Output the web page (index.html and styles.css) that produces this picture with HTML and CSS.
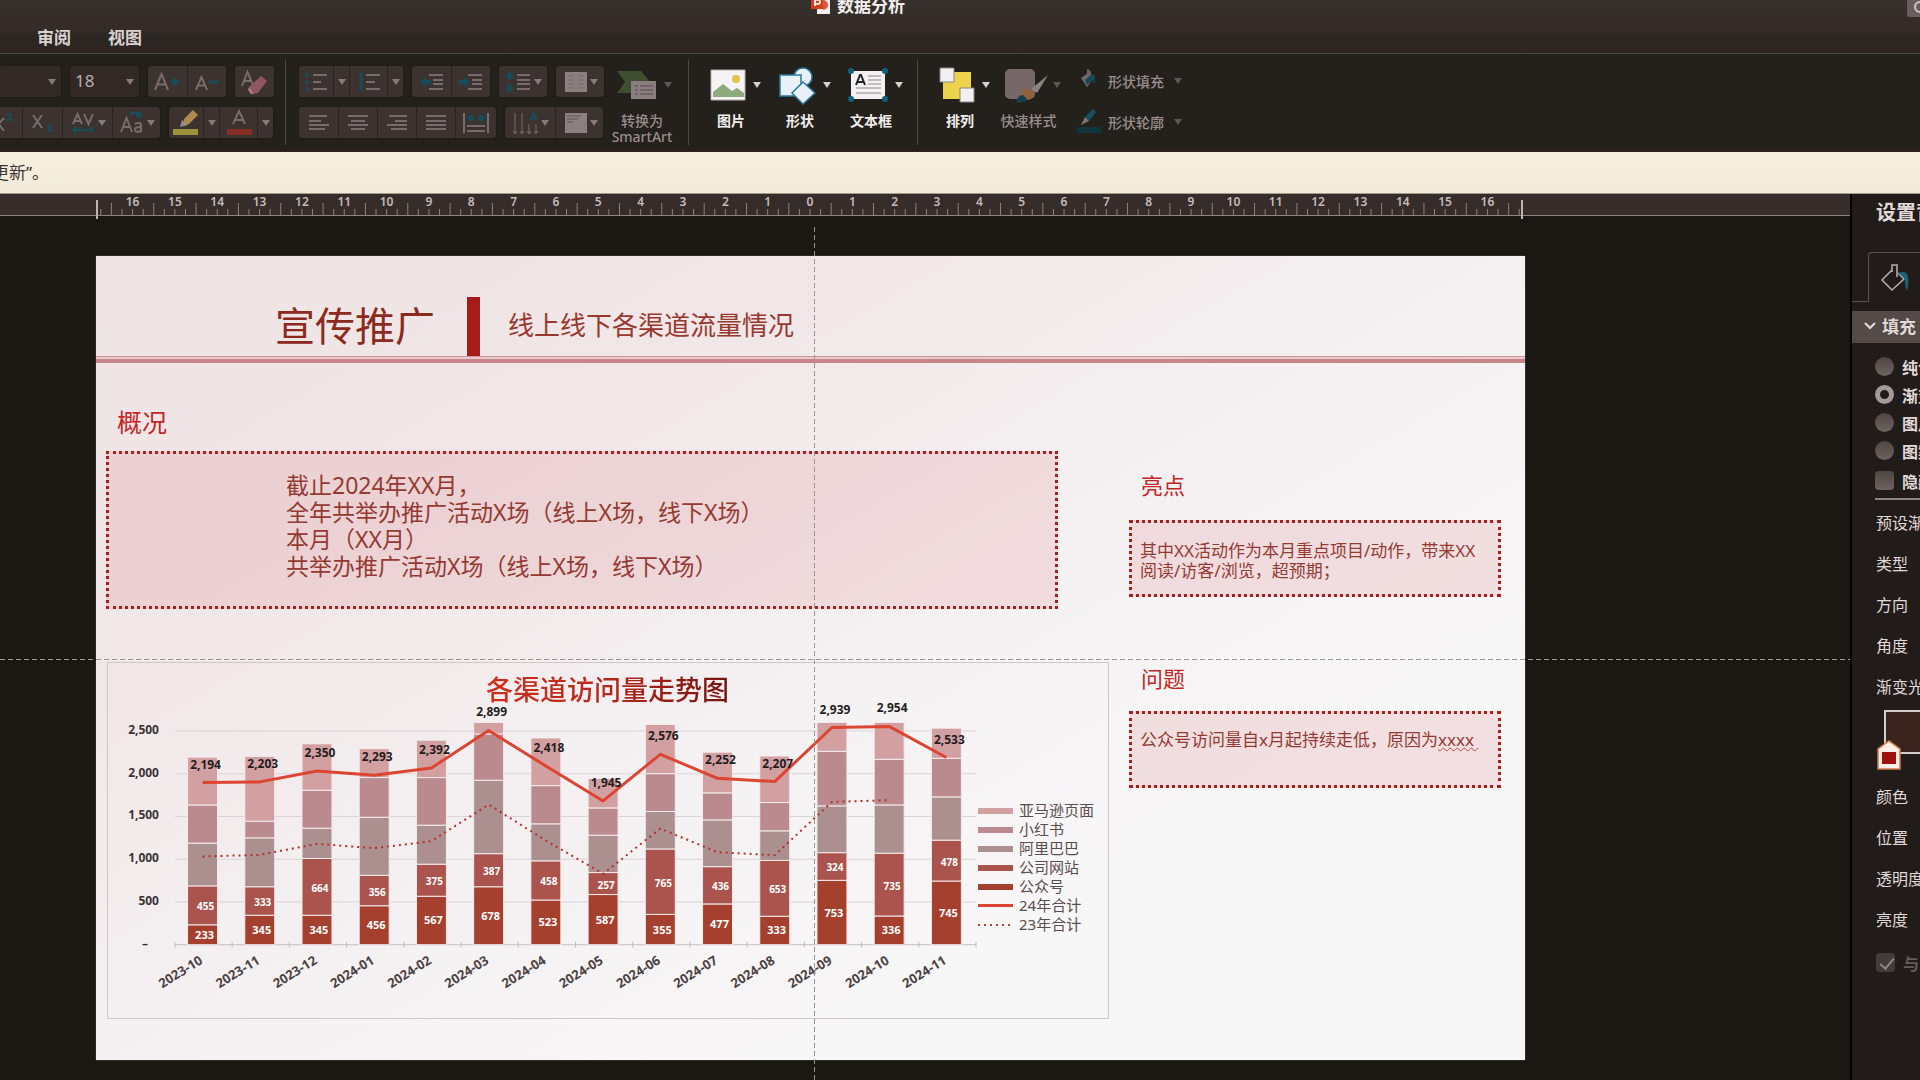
FILE: index.html
```html
<!DOCTYPE html>
<html lang="zh-CN">
<head>
<meta charset="utf-8">
<title>数据分析</title>
<link rel="stylesheet" href="styles.css">
</head>
<body>
<header class="titlebar">
  <div class="doc-title">
    <svg class="doc-icon" width="20" height="20" viewBox="0 0 20 20" aria-hidden="true">
      <path d="M6 3h13v15H6z" fill="#f4efee"/><path d="M12 4a5 5 0 0 1 0 10z" fill="#e0563a"/><path d="M0 1h12v12H0z" fill="#cf4021"/>
      <path d="M4 10V4h3a2 2 0 0 1 0 4H4" fill="none" stroke="#fff" stroke-width="1.6"/>
    </svg>
    <span>数据分析</span>
  </div>
  <button class="search" aria-label="搜索"><svg width="16" height="16" viewBox="0 0 16 16"><circle cx="7" cy="6" r="5" fill="none" stroke="#cfc6c6" stroke-width="2"/><path d="M11 10l4 4" stroke="#cfc6c6" stroke-width="2"/></svg></button>
  <nav class="tabs">
    <a href="#review">审阅</a>
    <a href="#view">视图</a>
  </nav>
</header>

<div class="ribbon">
  <div class="stack">
    <div class="row">
      <label class="combo combo-font"><select aria-label="字体"><option></option></select><i class="caret"></i></label>
      <label class="combo combo-size"><select aria-label="字号"><option>18</option></select><i class="caret"></i></label>
      <div class="group">
        <button class="w39" aria-label="增大字号"><svg width="32" height="24"><path d="M3 20L9.500 4l6.500 16M5.500 14.500h8" class="g"/><path d="M19 12h8M23 8v8" class="t"/></svg></button>
        <button class="w39" aria-label="减小字号"><svg width="32" height="24"><path d="M5 20L10.500 7l5.500 13M7 15.500h7" class="g"/><path d="M18 12h9" class="t"/></svg></button>
      </div>
      <div class="group">
        <button class="w39" aria-label="清除格式"><svg width="34" height="28"><path d="M4 18L9.500 4l5 12M6 13h7" class="g"/><path d="M11 19l12-11 6 5-9 12-6 1-3-3z" fill="#8f5560"/><path d="M11 19l5 7-3 0-3-4z" fill="#b07c86"/></svg></button>
      </div>
    </div>
    <div class="row">
      <div class="group cut-left">
        <button class="w22" aria-label="上标"><svg width="22" height="24"><path d="M-8 20L4 7M-6 7L4 20" class="g"/><path d="M7 4q4-2 4 1t-4 4h5" class="t thin"/></svg></button>
        <button class="w40" aria-label="下标"><svg width="30" height="24"><path d="M5 4l9 13M14 4L5 17" class="g"/><path d="M19 15q4-2 4 1t-4 4h5" class="t thin"/></svg></button>
        <button class="w50" aria-label="字符间距"><svg width="26" height="24"><path d="M3 13L7.500 3 12 13M5 10h5M14 3l4.500 10L23 3" class="g"/><path d="M3 19h20M6 16l-3 3 3 3M20 16l3 3-3 3" class="t thin"/></svg><i class="caret"></i></button>
        <button class="w48" aria-label="更改大小写"><svg width="26" height="26"><path d="M2 22L7.500 8l5.500 14M4 17h7M16 14q6-3 6 2v6M22 17q-7 0-6 3t6 1" class="g"/><path d="M11 5q5-5 10 0M21 2v4h-4" class="t"/></svg><i class="caret"></i></button>
      </div>
      <div class="group">
        <button class="w34" aria-label="突出显示颜色"><svg width="28" height="28"><path d="M12 10l9-9 5 5-9 9-6 1z" fill="#b08a4e"/><path d="M10 11l6 5-8 2z" fill="#988f8b"/><path d="M1 20h25v6H1z" fill="#9c923b"/></svg></button>
        <button class="w16 carbtn" aria-label="突出显示选项"><i class="caret"></i></button>
        <button class="w38" aria-label="字体颜色"><svg width="28" height="28"><path d="M8 15L14 2l6 13M10 11h8" class="g"/><path d="M2 20h25v6H2z" fill="#862d24"/></svg></button>
        <button class="w16 carbtn" aria-label="字体颜色选项"><i class="caret"></i></button>
      </div>
    </div>
  </div>
  <div class="sep"></div>
  <div class="stack">
    <div class="row">
      <div class="group">
        <button class="w34" aria-label="项目符号"><svg width="24" height="22"><path d="M9 4h14M9 11h8M9 18h14" class="g"/><path d="M3 2v4M3 9v4M3 16v4" class="t"/></svg></button>
        <button class="w16 carbtn" aria-label="项目符号选项"><i class="caret"></i></button>
        <button class="w38" aria-label="编号"><svg width="24" height="22"><path d="M9 4h14M9 11h9M9 18h14" class="g"/><path d="M4 2v18" class="t"/></svg></button>
        <button class="w16 carbtn" aria-label="编号选项"><i class="caret"></i></button>
      </div>
      <div class="group">
        <button class="w39" aria-label="减少缩进"><svg width="26" height="22"><path d="M10 4h14M14 9h10M14 13h10M10 18h14" class="g"/><path d="M1 11l6-5v3h5v4H7v3z" fill="#174d5b"/></svg></button>
        <button class="w39" aria-label="增加缩进"><svg width="26" height="22"><path d="M10 4h14M14 9h10M14 13h10M10 18h14" class="g"/><path d="M12 11L6 6v3H1v4h5v3z" fill="#174d5b"/></svg></button>
      </div>
      <div class="group">
        <button class="w48" aria-label="行距"><svg width="28" height="24"><path d="M13 5h13M13 10h13M13 14h13M13 19h13" class="g"/><path d="M5 1l5 6H7v3H4V7H1zM5 23l5-6H7v-3H4v3H1z" fill="#174d5b"/></svg><i class="caret"></i></button>
      </div>
      <div class="group">
        <button class="w48" aria-label="分栏"><svg width="26" height="22"><path d="M3 1h22v20H3z" fill="#8a8080"/><path d="M6 5h6M6 9h6M6 13h6M6 17h6M16 5h6M16 9h6M16 13h6M16 17h6" stroke="#756b6a"/></svg><i class="caret"></i></button>
      </div>
    </div>
    <div class="row">
      <div class="group">
        <button class="w39" aria-label="左对齐"><svg width="24" height="20"><path d="M2 3h18M2 8h12M2 12h20M2 16h16" class="g"/></svg></button>
        <button class="w39" aria-label="居中"><svg width="24" height="20"><path d="M2 3h20M5 8h14M2 12h20M5 16h14" class="g"/></svg></button>
        <button class="w39" aria-label="右对齐"><svg width="24" height="20"><path d="M4 3h18M10 8h12M2 12h20M6 16h16" class="g"/></svg></button>
        <button class="w39" aria-label="两端对齐"><svg width="24" height="20"><path d="M2 3h20M2 8h20M2 12h20M2 16h20" class="g"/></svg></button>
        <button class="w41" aria-label="分散对齐"><svg width="28" height="24"><path d="M2 2v20M26 2v20M5 15h18M5 20h18" class="g"/><path d="M4 7l5-4 4 4-4 4zM24 7l-5-4-4 4 4 4z" fill="#174d5b"/></svg></button>
      </div>
      <div class="group">
        <button class="w50" aria-label="文字方向"><svg width="28" height="24"><path d="M4 2v20M11 2v20M18 13v9M25 13v9M2 20l2 3 2-3M9 20l2 3 2-3M16 20l2 3 2-3M23 20l2 3 2-3" class="g slim"/><path d="M19 9l4-7 3 7M20 7h5" class="t thin"/></svg><i class="caret"></i></button>
        <button class="w48" aria-label="对齐文本"><svg width="26" height="22"><path d="M3 1h22v20H3z" fill="#8a8080"/><path d="M5 4h14M5 7h11M5 10h6" stroke="#5d5453"/></svg><i class="caret"></i></button>
      </div>
    </div>
  </div>
  <button class="big dim smartart">
    <span class="pic"><svg width="40" height="36" viewBox="0 0 40 36"><path d="M0 4h24l9 11-9 11H0l8-11z" fill="#3e4f2f"/><path d="M14 14h25v18H14z" fill="#8a7d7f"/><path d="M18 19h18M18 23h18M18 27h18" stroke="#554b4c" stroke-dasharray="3 2 20"/></svg><i class="caret"></i></span>
    <span>转换为<br>SmartArt</span>
  </button>
  <div class="sep"></div>
  <div class="bigs">
    <button class="big">
      <span class="pic"><svg width="36" height="36" viewBox="0 0 36 36"><path d="M1 3h34v30H1z" fill="#f5f3f3" stroke="#b9b3b3"/><circle cx="26" cy="12" r="4" fill="#e3c545"/><path d="M3 30v-5l10-8 9 7 5-3 7 5v4z" fill="#8fab7e"/></svg><i class="caret"></i></span>
      <span>图片</span>
    </button>
    <button class="big">
      <span class="pic"><svg width="38" height="40" viewBox="0 0 38 40"><g fill="#e8f1f9" stroke="#2a789d" stroke-width="1.500"><circle cx="25" cy="12" r="9"/><path d="M2 10h21v21H2z"/><path d="M25 17l12 11-12 11-11-11z"/></g></svg><i class="caret"></i></span>
      <span>形状</span>
    </button>
    <button class="big">
      <span class="pic"><svg width="40" height="36" viewBox="0 0 40 36"><path d="M3 4h34v28H3z" fill="#f3f1f1"/><g fill="#15607a"><circle cx="3" cy="4" r="3"/><circle cx="37" cy="4" r="3"/><circle cx="3" cy="32" r="3"/><circle cx="37" cy="32" r="3"/></g><path d="M8 18l4-10h1l4 10M9 15h6" fill="none" stroke="#222" stroke-width="2"/><path d="M20 9h13M20 13h13M20 17h13M8 21h25M8 26h25" stroke="#8d8788"/></svg><i class="caret"></i></span>
      <span>文本框</span>
    </button>
  </div>
  <div class="sep"></div>
  <div class="bigs arrange">
    <button class="big">
      <span class="pic"><svg width="36" height="36" viewBox="0 0 36 36"><path d="M4 5h28v27H4z" fill="#edd34c"/><path d="M1 1h14v14H1zM21 21h14v14H21z" fill="#f2f0f2" stroke="#8b8585"/></svg><i class="caret"></i></span>
      <span>排列</span>
    </button>
    <button class="big dim">
      <span class="pic"><svg width="46" height="38" viewBox="0 0 46 38"><rect x="2" y="3" width="30" height="30" rx="5" fill="#766868"/><path d="M45 9L34 27l-6-4z" fill="#8b8282"/><path d="M18 29q4-8 9-6l4 5q-1 6-8 6z" fill="#925f38"/><path d="M13 36q2-7 7-7l4 4q-3 5-11 3z" fill="#12404c"/></svg><i class="caret"></i></span>
      <span>快速样式</span>
    </button>
  </div>
  <div class="stack shape-tools">
    <button class="tool dim"><svg width="26" height="28" viewBox="0 0 26 28"><path d="M5 11l7-5 5 6-6 8z" fill="#716a6a"/><path d="M12 2v7M14 4v5" stroke="#6b6463" stroke-width="2"/><path d="M9 13l7-6 3 2v8l-2-4-6 5z" fill="#164856"/></svg><span>形状填充</span><i class="caret"></i></button>
    <button class="tool dim"><svg width="26" height="28" viewBox="0 0 26 28"><path d="M9 9l8-8 3 3-7 9z" fill="#17505e"/><path d="M9 9l4 4-8 4z" fill="#7d7574"/><path d="M1 19h24v6H1z" fill="#10353e"/></svg><span>形状轮廓</span><i class="caret"></i></button>
  </div>
</div>

<div class="notice">更新”。</div>

<div class="workspace">
  <main class="editor">
    <div class="ruler"><svg id="ruler" viewBox="0 0 1429 22"></svg></div>
    <div class="canvas">
      <article class="slide">
        <header class="slide-head">
          <h1>宣传推广</h1>
          <div class="mark"></div>
          <h2>线上线下各渠道流量情况</h2>
        </header>
        <div class="slide-body">
          <div class="left">
            <h3>概况</h3>
            <p class="note overview">截止2024年XX月，<br>全年共举办推广活动X场（线上X场，线下X场）<br>本月（XX月）<br>共举办推广活动X场（线上X场，线下X场）</p>
            <figure class="chart">
              <figcaption><span>各渠道访问量走势图</span></figcaption>
              <div class="chart-row">
                <svg id="chart" viewBox="0 0 870 310"></svg>
                <ul class="legend">
                  <li><i class="sw c5"></i>亚马逊页面</li>
                  <li><i class="sw c4"></i>小红书</li>
                  <li><i class="sw c3"></i>阿里巴巴</li>
                  <li><i class="sw c2"></i>公司网站</li>
                  <li><i class="sw c1"></i>公众号</li>
                  <li><i class="sw solid"></i>24年合计</li>
                  <li><i class="sw dots"></i>23年合计</li>
                </ul>
              </div>
            </figure>
          </div>
          <div class="right">
            <h3>亮点</h3>
            <p class="note small">其中XX活动作为本月重点项目/动作，带来XX阅读/访客/浏览，超预期；</p>
            <h3 class="second">问题</h3>
            <p class="note small">公众号访问量自x月起持续走低，原因为<span class="misspelt">xxxx </span></p>
          </div>
        </div>
      </article>
      <div class="guide-v"></div>
      <div class="guide-h"></div>
    </div>
  </main>
  <aside class="pane">
    <h2>设置背</h2>
    <div class="pane-tabs"><button aria-label="填充"><svg width="32" height="30" viewBox="0 0 32 30"><path d="M12 9V2h5v12M12 7L2 17l10 10 12-11-6-6" fill="none" stroke="#b3abaa" stroke-width="1.600"/><path d="M18 10q9-3 10 4 1 6-1 14-2-4-2-9 0-4-3-6z" fill="#1c6379"/></svg></button></div>
    <button class="section"><svg width="12" height="8" viewBox="0 0 12 8"><path d="M1 1l5 5 5-5" fill="none" stroke="#e6dfde" stroke-width="2"/></svg>填充</button>
    <div class="choices">
      <label><input type="radio" name="fill">纯色</label>
      <label><input type="radio" name="fill" checked>渐变</label>
      <label><input type="radio" name="fill">图片</label>
      <label><input type="radio" name="fill">图案</label>
      <label><input type="checkbox">隐藏</label>
    </div>
    <ul class="props">
      <li>预设渐</li><li>类型</li><li>方向</li><li>角度</li><li>渐变光</li>
    </ul>
    <div class="stops"><div class="bar"></div><svg width="26" height="32" viewBox="0 0 26 32"><path d="M2 30V10L13 2l11 8v20z" fill="#fbeee8" stroke="#cf7a4b" stroke-width="1.500"/><path d="M6 13h14v12H6z" fill="#9c120e"/></svg></div>
    <ul class="props">
      <li>颜色</li><li>位置</li><li>透明度</li><li>亮度</li>
    </ul>
    <label class="rotate"><input type="checkbox" checked disabled>与</label>
  </aside>
</div>
<script src="script.js"></script>
</body>
</html>
```
FILE: styles.css
```css
* { box-sizing: border-box; }
body {
  margin: 0;
  height: 100vh;
  overflow: hidden;
  display: flex;
  flex-direction: column;
  background: #1b1813;
  color: #e0d9d8;
  font-family: "Noto Sans", "Noto Sans CJK SC", sans-serif;
}
h1, h2, h3, p, figure, ul { margin: 0; padding: 0; font-weight: 400; }
ul { list-style: none; }
button, select { font: inherit; color: inherit; background: none; border: 0; padding: 0; margin: 0; }
svg { display: block; flex: none; }
a { color: inherit; text-decoration: none; }

.titlebar {
  flex: none;
  height: 54px;
  position: relative;
  border-bottom: 1px solid #4d4643;
  background: linear-gradient(#37322e 0, #352c29 18px, #352b27 30px, #2c2723 34px, #2c2622 42px, #322523 53px);
}
.doc-title {
  height: 12px;
  padding-right: 354px;
  padding-left: 150px;
  display: flex;
  align-items: center;
  justify-content: center;
  gap: 6px;
  font-size: 17px;
  line-height: 12px;
  font-weight: 700;
  color: #f3efee;
}
.search { position: absolute; right: 0; top: 0; width: 13px; height: 17px; overflow: hidden; background: #6a5d5d; padding: 0 0 0 6px; border-radius: 0 0 0 2px; }
.tabs { display: flex; gap: 37px; padding: 14px 0 0 37px; font-size: 17px; line-height: 24px; font-weight: 700; color: #d9d2d1; }

.ribbon { flex: none; height: 98px; display: flex; align-items: flex-start; padding-top: 6px; background: #24201c; border-bottom: 1px solid #33211f; }
.stack { display: flex; flex-direction: column; gap: 10px; padding-top: 6px; }
.row { display: flex; gap: 9px; }
.group, .combo { display: flex; height: 31px; border-radius: 3px; background: #3c322f; overflow: hidden; box-shadow: 0 0 2px #171310; }
.cut-left { border-radius: 0 3px 3px 0; }
.group button { display: flex; align-items: center; justify-content: center; gap: 2px; }
.group button + button { border-left: 1px solid #2a2220; }
.combo { background: #322927; align-items: center; }
.combo select { appearance: none; flex: 1; min-width: 0; height: 31px; padding: 0 0 2px 5px; font-size: 17px; color: #b9afae; }
.combo .caret { margin: 0 5px; }
.combo-font { width: 61px; border-radius: 0 3px 3px 0; }
.combo-size { width: 69px; }
.caret { flex: none; width: 0; height: 0; border: 4px solid transparent; border-top: 6px solid #857a79; border-bottom: 0; }
.w16 { width: 16px; } .w22 { width: 22px; } .w34 { width: 34px; } .w38 { width: 38px; } .w39 { width: 39px; }
.w40 { width: 40px; } .w41 { width: 41px; } .w48 { width: 48px; } .w50 { width: 50px; }
.g { fill: none; stroke: #776c6b; stroke-width: 2; }
.t { fill: none; stroke: #174d5b; stroke-width: 3; }
.thin { stroke-width: 2; }
.slim { stroke-width: 1; }
.sep { flex: none; width: 1px; height: 85px; margin: 0 13px 0 11px; background: #4d4644; }
.big { display: flex; flex-direction: column; align-items: center; font-size: 14px; line-height: 16px; font-weight: 700; color: #f1edec; }
.big .pic { display: flex; align-items: center; gap: 7px; height: 50px; padding-left: 15px; margin-bottom: 3px; }
.big .pic + span { padding-left: 6px; }
.big .caret { border-top-color: #d6cfce; }
.dim, .big.dim { color: #998e8d; font-weight: 500; }
.dim .caret, .big.dim .caret { border-top-color: #5f5655; }
.smartart { margin-left: 7px; width: 62px; }
.smartart .pic { padding-left: 4px; }
.smartart .pic + span { padding-left: 0; }
.bigs { display: flex; gap: 2px; }
.smartart + .sep { margin: 0 6px 0 15px; }
.bigs + .sep { margin: 0 6px 0 14px; }
.bigs.arrange { gap: 6px; }
.arrange .dim .pic { gap: 4px; padding-left: 7px; }
.arrange .dim .pic + span { padding-left: 0; }
.shape-tools { margin-left: 15px; padding-top: 5px; gap: 9px; }
.tool { display: flex; align-items: center; height: 32px; gap: 6px; font-size: 14px; }
.tool .caret { margin-left: 4px; }

.notice { flex: none; height: 42px; padding-top: 9px; text-indent: -8px; font-size: 17px; line-height: 24px; color: #3b312d; background: linear-gradient(#f8f0de, #f2ead8); border-bottom: 1px solid #a59b8c; overflow: hidden; }

.workspace { flex: 1; min-height: 0; display: flex; }
.editor { flex: 1; min-width: 0; display: flex; flex-direction: column; border-right: 1px solid #050403; }
.ruler { flex: none; height: 22px; background: #362c2a; border-bottom: 1px solid #8b8381; padding: 0 325px 0 96px; }
.ruler svg { width: 100%; height: 22px; overflow: visible; }
.ruler line { stroke: #8b8381; }
.ruler .end { stroke: #bdb5b4; stroke-width: 2; }
.ruler text { font-size: 12px; font-weight: 600; fill: #c4bcbb; text-anchor: middle; }
.canvas { flex: 1; min-height: 0; position: relative; padding: 40px 325px 20px 96px; overflow: hidden; }
.guide-v { position: absolute; left: 814px; top: 11px; bottom: 0; width: 1px; background: repeating-linear-gradient(#9b9494 0 5px, transparent 5px 8px); }
.guide-h { position: absolute; left: 0; right: 0; top: 443px; height: 1px; background: repeating-linear-gradient(90deg, #9b9494 0 5px, transparent 5px 8px); }

.slide { background: linear-gradient(150deg, #f0e4e4 0, #f1e7e8 28%, #f4f0f2 48%, #f8f7f8 75%); box-shadow: 0 0 1px #8d8787; padding-bottom: 41px; }
.slide-head { display: flex; align-items: flex-end; height: 107px; padding-left: 179px; border-bottom: 4px solid #c78489; position: relative; box-shadow: inset 0 -2px #e8cccd, inset 0 -3px #c99599; }
.slide-head h1 { font-size: 40px; line-height: 60px; color: #8c2a20; padding-bottom: 3px; }
.mark { width: 13px; height: 59px; margin: 0 28px 3px 32px; background: #a51c19; }
.slide-head h2 { font-size: 26px; line-height: 40px; color: #983930; padding-bottom: 14px; }
.slide-body { display: grid; grid-template-columns: minmax(0, 1fr) 372px; gap: 20px; padding: 0 24px 0 10px; }
.left { padding-top: 43px; }
.left h3 { padding-left: 11px; font-size: 25px; line-height: 32px; color: #c32626; }
.right { padding-top: 106px; }
.right h3 { padding-left: 12px; font-size: 22px; line-height: 32px; color: #c32626; }
.right .second { margin-top: 65px; }
.note { border: 3px dotted #a3201e; background: rgba(218, 122, 126, .19); color: #943a33; }
.overview { margin: 13px 51px 53px 0; min-height: 158px; padding: 18px 0 0 177px; font-size: 23px; line-height: 27px; }
.small { margin-top: 19px; min-height: 77px; padding: 18px 14px 0 8px; font-size: 17px; line-height: 20px; white-space: pre-wrap; }
.second + .small { margin-top: 17px; padding-top: 16px; }
.misspelt { text-decoration: underline wavy #c8453f 1px; }

.chart { border: 1px solid #cdc8ca; min-height: 357px; margin-left: 1px; }
.chart figcaption { height: 42px; padding: 9px 0 0 378px; font-size: 27px; line-height: 36px; font-weight: 500; }
.chart figcaption span { background: linear-gradient(90deg, #cf2f1c, #b8281c 50%, #74140f); background-clip: text; color: transparent; }
.chart-row { display: flex; align-items: flex-start; }
#chart { flex: 1 1 0; min-width: 0; overflow: visible; }
.legend { width: 131px; flex: none; padding-top: 96px; font-size: 15px; line-height: 19px; color: #5b4c4d; white-space: nowrap; }
.legend li { display: flex; align-items: center; gap: 6px; }
.sw { width: 35px; height: 6px; flex: none; margin-left: 1px; }
.c5 { background: #d3a0a2; fill: #d3a0a2; }
.c4 { background: #bb8a8f; fill: #bb8a8f; }
.c3 { background: #ac8f8f; fill: #ac8f8f; }
.c2 { background: #ab544d; fill: #ab544d; }
.c1 { background: #a6402e; fill: #a6402e; }
.solid { height: 3px; background: #dc4531; }
.dots { height: 2px; background: repeating-linear-gradient(90deg, #b5403b 0 2px, transparent 2px 6px); }
#chart .grid { stroke: #d9d3d6; }
#chart .axis { stroke: #c3bcbf; }
#chart rect { stroke: #f3ecee; stroke-width: 1; }
#chart text { font-weight: 700; text-anchor: middle; }
#chart .ylab { font-size: 12px; text-anchor: end; fill: #3a3334; }
#chart .xlab { font-size: 13px; text-anchor: end; fill: #4b4142; }
#chart .total { font-size: 12px; fill: #231c1d; }
#chart .inner { font-size: 11px; fill: #fff; }
#chart .inner2 { font-size: 10px; fill: #fff; }
#chart .l24 { fill: none; stroke: #dc4531; stroke-width: 3; stroke-linejoin: round; }
#chart .l23 { fill: none; stroke: #b5302b; stroke-width: 2; stroke-dasharray: 2 4; }

.pane { flex: none; width: 69px; overflow: hidden; background: #211c1a; border-left: 1px solid #050403; white-space: nowrap; font-size: 16px; font-weight: 600; }
.pane h2 { padding: 3px 0 0 24px; font-size: 20px; line-height: 32px; font-weight: 700; }
.pane-tabs { display: flex; margin-top: 23px; height: 50px; }
.pane-tabs::before { content: ""; width: 16px; flex: none; border-bottom: 1px solid #595150; }
.pane-tabs button { flex: 1; border: 1px solid #595150; border-width: 1px 0 0 1px; border-radius: 4px 0 0 0; padding-left: 11px; }
.section { width: 100%; margin-top: 9px; height: 32px; display: flex; align-items: center; gap: 6px; padding: 0 0 3px 12px; background: #544a48; font-size: 17px; font-weight: 700; }
.choices { display: flex; flex-direction: column; gap: 3px; margin: 11px 0 0 23px; padding-bottom: 5px; border-bottom: 2px solid #8c8382; }
.choices label, .rotate { display: flex; align-items: center; gap: 8px; height: 25px; }
.choices label:last-child { margin-top: 2px; }
input { appearance: none; flex: none; margin: 0; width: 19px; height: 19px; background: linear-gradient(#4f4543, #6e6361); border-radius: 4px; }
input[type="radio"] { border-radius: 50%; }
input[type="radio"]:checked { background: #211c1a; border: 5px solid #a39a99; }
.props { padding-left: 24px; line-height: 41px; }
.choices + .props { margin-top: 3px; }
.stops { position: relative; height: 69px; padding: 2px 0 0 32px; }
.stops .bar { height: 44px; border: 2px solid #d5cdcb; border-right: 0; background: #38231d; }
.stops svg { position: absolute; left: 24px; top: 31px; }
.rotate { margin: 9px 0 0 24px; color: #655c5b; }
.rotate input { background: #433a39; position: relative; }
.rotate input::after { content: ""; position: absolute; left: 7px; top: 2px; width: 6px; height: 12px; border: solid #8f8685; border-width: 0 2px 2px 0; transform: rotate(40deg); }
```
FILE: script.js
```js
const NS = "http://www.w3.org/2000/svg";
function add(parent, tag, attrs, text) {
  const el = document.createElementNS(NS, tag);
  for (const k in attrs) el.setAttribute(k, attrs[k]);
  if (text !== undefined) el.textContent = text;
  parent.appendChild(el);
  return el;
}

// Ruler: zero in the middle, a tall tick halfway between numbers, short ticks on quarters.
const ruler = document.getElementById("ruler");
const UNIT = 42.34, ZERO = 714;
for (let q = -67; q <= 67; q++) {
  const x = ZERO + q * UNIT / 4;
  if (x < 0 || x > 1426) continue;
  const tall = Math.abs(q % 4) === 2;
  add(ruler, "line", { x1: x, x2: x, y1: tall ? 9 : 15, y2: 21 });
  if (q % 4 === 0) add(ruler, "text", { x: x, y: 12 }, Math.abs(q / 4));
}
add(ruler, "line", { x1: 1, x2: 1, y1: 6, y2: 25, class: "end" });
add(ruler, "line", { x1: 1426, x2: 1426, y1: 6, y2: 25, class: "end" });

// Chart: running totals of the five channels per month, then last year's total.
const months = [
  ["2023-10", [233, 688, 1188, 1635, 2194], 1194],
  ["2023-11", [345, 678, 1250, 1445, 2203], 1216],
  ["2023-12", [345, 1009, 1363, 1807, 2350], 1365],
  ["2024-01", [456, 812, 1491, 1955, 2293], 1306],
  ["2024-02", [567, 942, 1398, 1955, 2392], 1401],
  ["2024-03", [678, 1065, 1924, 2465, 2899], 1896],
  ["2024-04", [523, 981, 1414, 1861, 2418], 1410],
  ["2024-05", [587, 844, 1281, 1600, 1945], 959],
  ["2024-06", [355, 1120, 1558, 2001, 2576], 1572],
  ["2024-07", [477, 913, 1460, 1776, 2252], 1252],
  ["2024-08", [333, 986, 1332, 1663, 2207], 1212],
  ["2024-09", [753, 1077, 1624, 2262, 2939], 1932],
  ["2024-10", [336, 1071, 1635, 2169, 2954], 1955],
  ["2024-11", [745, 1223, 1729, 2181, 2533], null]
];
const chart = document.getElementById("chart");
const LEFT = 67, RIGHT = 869, BASE = 240, STEP = (RIGHT - LEFT) / months.length;
const y = v => BASE - Math.min(v, 2600) * 0.0856;
const yLine = v => BASE - v * 0.074;
const mid = i => LEFT + STEP * (i + 0.5) - 1;

for (let v = 0; v <= 2500; v += 500) {
  add(chart, "line", { x1: LEFT, x2: RIGHT, y1: y(v), y2: y(v), class: v ? "grid" : "axis" });
  add(chart, "text", { x: v ? 51 : 40, y: y(v) + 3, class: "ylab" }, v ? v.toLocaleString("en-US") : "–");
}
for (let i = 0; i <= months.length; i++) {
  const x = LEFT + STEP * i;
  add(chart, "line", { x1: x, x2: x, y1: BASE - 3, y2: BASE + 3, class: "axis" });
}
months.forEach(([name, sums], i) => {
  sums.forEach((s, k) => {
    const from = k ? sums[k - 1] : 0;
    add(chart, "rect", { x: mid(i) - 15, width: 30, y: y(s), height: y(from) - y(s), class: "c" + (k + 1) });
  });
  add(chart, "text", { x: mid(i) + 2, y: (y(0) + y(sums[0])) / 2 + 4, class: "inner" }, sums[0]);
  add(chart, "text", { x: mid(i) + 3, y: (y(sums[0]) + y(sums[1])) / 2 + 5, class: "inner2" }, sums[1] - sums[0]);
  const lx = mid(i) + 1, ly = BASE + 18;
  add(chart, "text", { x: lx, y: ly, class: "xlab", transform: `rotate(-32 ${lx} ${ly})` }, name);
});
const path = pts => pts.map(p => p.join(",")).join(" ");
add(chart, "polyline", { class: "l24", points: path(months.map((m, i) => [mid(i), yLine(m[1][4])])) });
add(chart, "polyline", { class: "l23", points: path(months.filter(m => m[2]).map((m, i) => [mid(i), yLine(m[2])])) });
months.forEach((m, i) => {
  add(chart, "text", { x: mid(i) + 3, y: yLine(m[1][4]) - 14, class: "total" }, m[1][4].toLocaleString("en-US"));
});
```
